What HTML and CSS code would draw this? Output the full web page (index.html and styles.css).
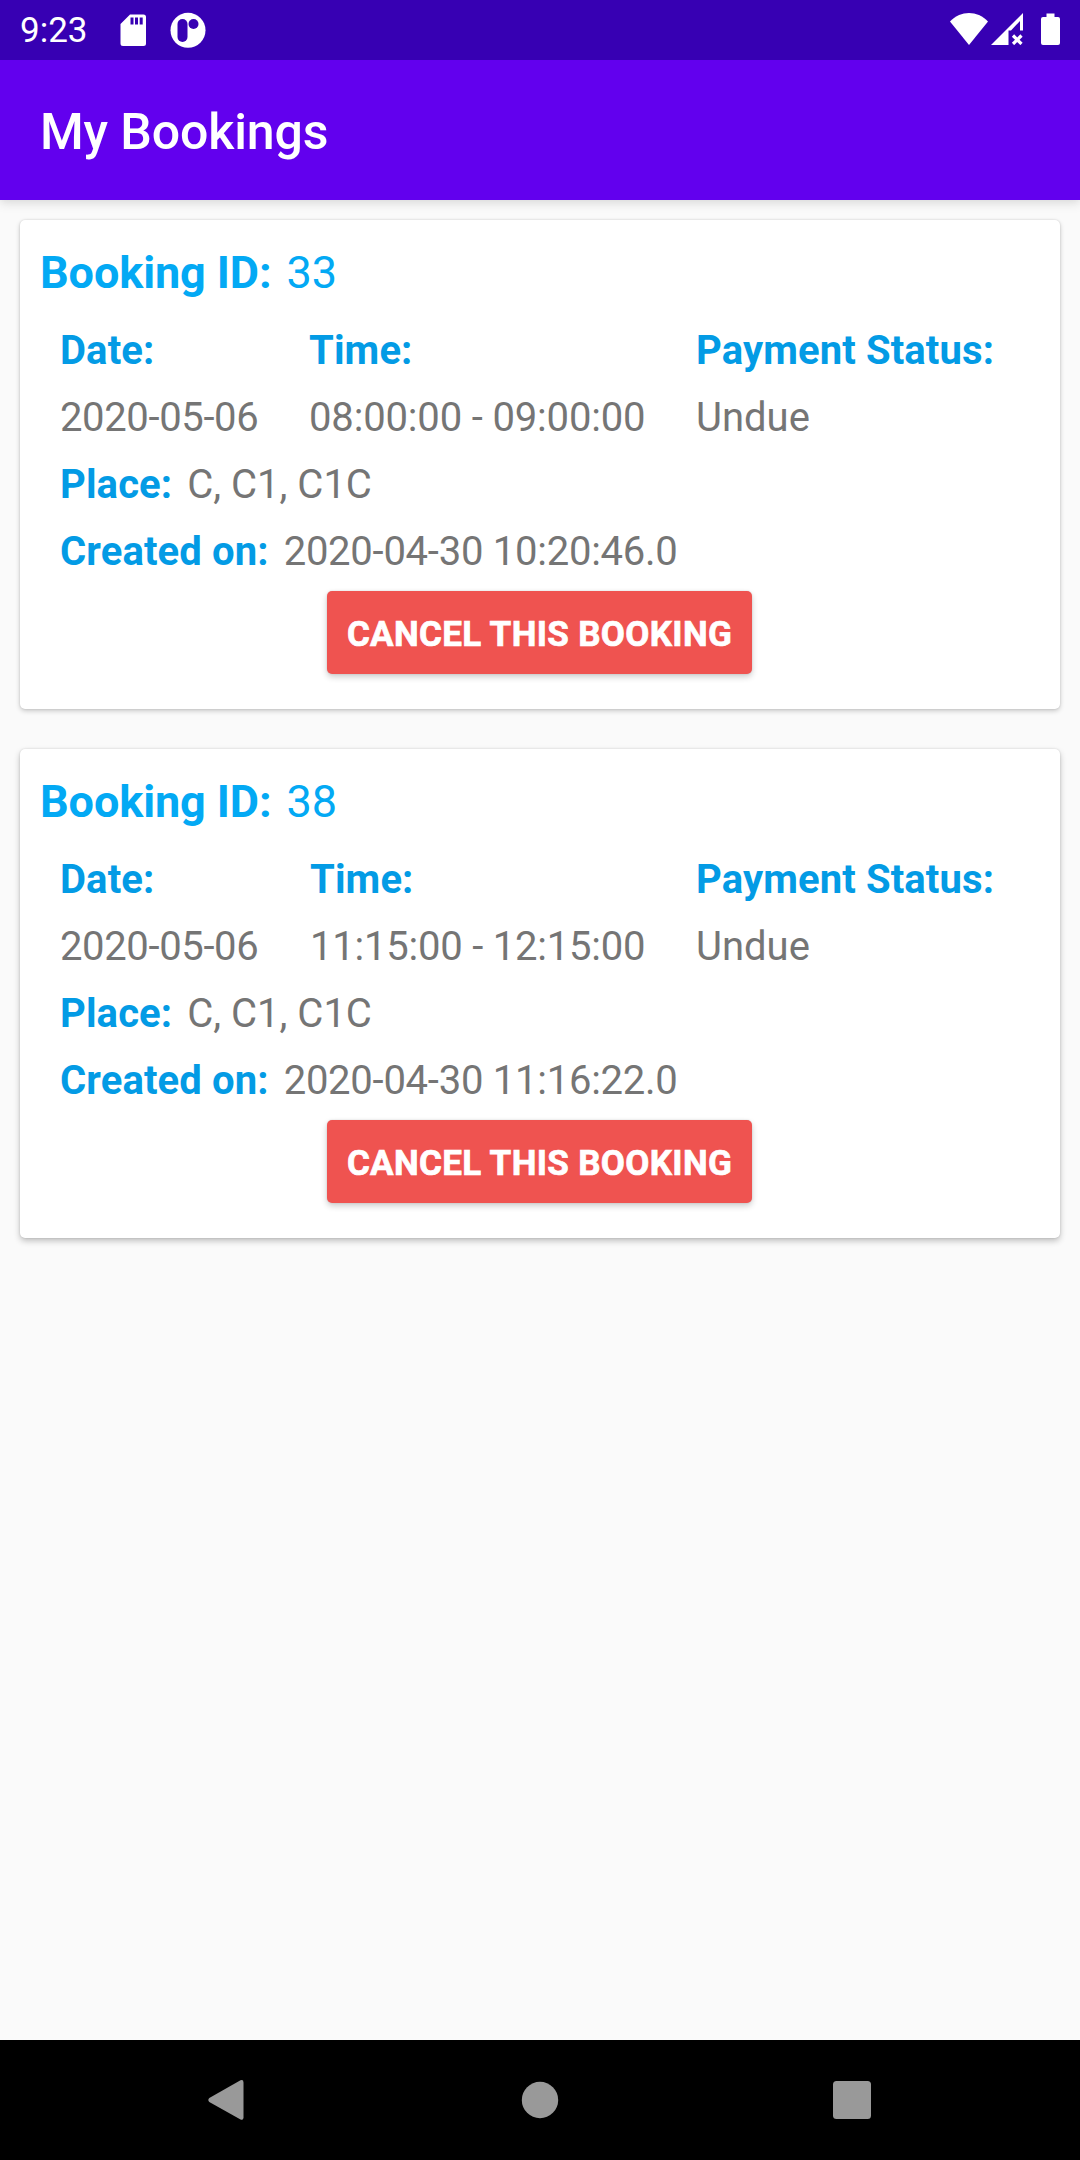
FILE: index.html
```html
<!DOCTYPE html>
<html lang="en">
<head>
<meta charset="utf-8">
<title>My Bookings</title>
<link rel="stylesheet" href="styles.css">
</head>
<body>
<div class="screen">
  <div class="status-bar">
    <span class="clock">9:23</span>
    <svg class="icon-sd" width="26" height="32" viewBox="0 0 26 32"><path fill="#fff" fill-rule="evenodd" d="M10 0.5H23.5Q26 .5 26 3V29.500Q26 32 23.500 32H3Q.5 32 .5 29.500V10ZM10.500 3.500V10.500H13.500V3.500ZM15 3.500V10.500H18V3.500ZM19.700 3.500V10.500H22.700V3.500Z"/></svg>
    <svg class="icon-app" width="36" height="36" viewBox="0 0 36 36"><circle cx="18" cy="18.300" r="17.500" fill="#fff"/><rect x="7.500" y="7" width="10" height="23" rx="5" fill="#3700b3"/><circle cx="23.500" cy="12" r="5" fill="#3700b3"/></svg>
    <div class="status-right">
      <svg class="icon-wifi" width="38" height="32" viewBox="0 0 38 32"><path fill="#fff" d="M19 32L0 8.500C11-2.800 27-2.800 38 8.500Z"/></svg>
      <svg class="icon-signal" width="32" height="32" viewBox="0 0 32 32"><path fill="#fff" d="M0 32L32 0V17.500H29V8L20 17.500H17.500V32Z"/><path d="M22 22.500L30.500 31M30.500 22.500L22 31" stroke="#fff" stroke-width="3.200"/></svg>
      <svg class="icon-battery" width="19" height="32" viewBox="0 0 19 32"><path fill="#fff" d="M5.500 .5H13.500V4H17Q19 4 19 6V30Q19 32 17 32H2Q0 32 0 30V6Q0 4 2 4H5.500Z"/></svg>
    </div>
  </div>
  <header class="app-bar"><h1 class="title">My Bookings</h1></header>
  <main class="bookings">
    <article class="card">
      <div class="booking-id"><b>Booking ID:</b><span>33</span></div>
      <div class="details">
        <b>Date:</b><b>Time:</b><b>Payment Status:</b>
        <span class="date">2020-05-06</span><span class="time">08:00:00 - 09:00:00</span><span>Undue</span>
      </div>
      <div class="line"><b>Place:</b><span>C, C1, C1C</span></div>
      <div class="line"><b>Created on:</b><span class="created">2020-04-30 10:20:46.0</span></div>
      <button class="cancel">CANCEL THIS BOOKING</button>
    </article>
    <article class="card card-last">
      <div class="booking-id"><b>Booking ID:</b><span>38</span></div>
      <div class="details">
        <b>Date:</b><b>Time:</b><b>Payment Status:</b>
        <span class="date">2020-05-06</span><span class="time">11:15:00 - 12:15:00</span><span>Undue</span>
      </div>
      <div class="line"><b>Place:</b><span>C, C1, C1C</span></div>
      <div class="line"><b>Created on:</b><span class="created">2020-04-30 11:16:22.0</span></div>
      <button class="cancel">CANCEL THIS BOOKING</button>
    </article>
  </main>
  <nav class="nav-bar">
    <svg width="40" height="40" viewBox="0 0 40 40"><path fill="#999" d="M34.500 .3Q37.500-.7 37.500 2.500V37.500Q37.500 40.700 34.500 39.500L3.300 22Q1.300 20 3.300 18Z"/></svg>
    <svg width="40" height="40" viewBox="0 0 40 40"><circle cx="21" cy="20" r="18.200" fill="#999"/></svg>
    <svg width="40" height="40" viewBox="0 0 40 40"><rect x="1" y="1" width="38" height="38" rx="3.500" fill="#999"/></svg>
  </nav>
</div>
</body>
</html>
```
FILE: styles.css
```css
* { box-sizing: border-box; }
body { margin: 0; font-family: Roboto, sans-serif; }
.screen {
  width: 1080px;
  height: 2160px;
  display: flex;
  flex-direction: column;
  background: #fafafa;
  overflow: hidden;
}
svg { display: block; flex: none; }
b { font-weight: 700; }

.status-bar {
  position: relative;
  z-index: 1;
  height: 60px;
  flex: none;
  display: flex;
  align-items: center;
  padding: 0 20px;
  background: #3700b3;
  color: #fff;
}
.clock { width: 100px; font-size: 35px; line-height: 60px; padding-top: 2px; }
.icon-app { margin-left: 24px; }
.status-right { display: flex; margin-left: auto; margin-top: -2px; }
.icon-signal { margin-left: 3px; }
.icon-battery { margin-left: 18px; }

.app-bar {
  height: 140px;
  flex: none;
  padding: 0 40px;
  background: #6200ee;
  color: #fff;
  box-shadow: 0 4px 10px rgba(0, 0, 0, .1), 0 0 8px rgba(0, 0, 0, .05);
}
.title { margin: 0; font-size: 50px; font-weight: 500; line-height: 144px; letter-spacing: -.12px; }

.bookings {
  flex: 1;
  display: flex;
  flex-direction: column;
  gap: 40px;
  padding: 20px;
}
.card {
  height: 489px;
  display: flex;
  flex-direction: column;
  padding: 20px;
  background: #fff;
  border-radius: 5px;
  box-shadow: 0 2px 5px rgba(0, 0, 0, .2), 0 0 2px rgba(0, 0, 0, .15);
}
.card-last { box-shadow: 0 3px 6px rgba(0, 0, 0, .24), 0 0 2px rgba(0, 0, 0, .15); }
.booking-id {
  display: flex;
  gap: 15px;
  margin-bottom: 12px;
  font-size: 45px;
  line-height: 65px;
  letter-spacing: -.1px;
  color: #03a9f4;
}
.details, .line {
  padding-left: 20px;
  font-size: 40px;
  line-height: 67px;
  color: #757575;
  white-space: nowrap;
}
.details { display: grid; grid-template-columns: 249px 387px auto; }
.card-last .details { grid-template-columns: 250px 386px auto; }
.line { display: flex; gap: 15px; }
.details b, .line b { color: #039be5; letter-spacing: .12px; }
.date { letter-spacing: -.36px; }
.time { letter-spacing: -.16px; }
.card-last .time { letter-spacing: -.22px; }
.created { letter-spacing: -.25px; }
.cancel {
  flex: none;
  width: 425px;
  height: 83px;
  margin: 6px 0 0 287px;
  padding: 3px 0 0;
  border: 0;
  border-radius: 5px;
  background: #ef5350;
  color: #fff;
  font: 700 35px Roboto, sans-serif;
  letter-spacing: .33px;
  -webkit-text-stroke: .7px #fff;
  white-space: nowrap;
  box-shadow: 0 3px 6px rgba(0, 0, 0, .2), 0 0 2px rgba(0, 0, 0, .12);
}

.nav-bar {
  height: 120px;
  flex: none;
  display: flex;
  align-items: center;
  justify-content: space-between;
  padding: 0 208px 0 206px;
  background: #000;
}
```
